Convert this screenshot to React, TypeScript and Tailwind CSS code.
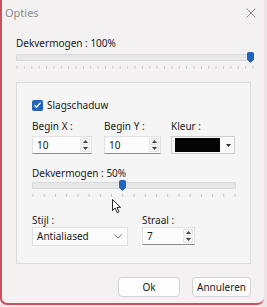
import React from "react";

const FONT = { fontFamily: '"Noto Sans", "Open Sans", Arial, sans-serif' };

function Ticks({ count, width }: { count: number; width: number }) {
  const step = (width - 2) / (count - 1);
  return (
    <svg width={width} height={4} className="block">
      {Array.from({ length: count }).map((_, i) => (
        <rect key={i} x={1 + i * step - 0.5} y={0} width={1} height={3} fill="#cacaca" />
      ))}
    </svg>
  );
}

function Thumb() {
  return (
    <svg width={7} height={11} className="block">
      <path d="M0.5 1.5 Q0.5 0.5 1.5 0.5 H5.5 Q6.5 0.5 6.5 1.5 V7.5 L3.5 10.5 L0.5 7.5 Z" fill="#1f64c0" stroke="#16509e" strokeWidth={0.8} />
    </svg>
  );
}

function Slider({ width, value, ticks }: { width: number; value: number; ticks: number }) {
  const left = Math.round((width - 7) * value);
  return (
    <div style={{ width }}>
      <div className="relative h-[11px]">
        <div className="absolute left-0 right-0 top-[2px] h-[7px] rounded-[1px] border border-[#d9d9d9] bg-[#e7e7e7]" />
        <div className="absolute top-0" style={{ left }}>
          <Thumb />
        </div>
      </div>
      <div className="mt-[3px]">
        <Ticks count={ticks} width={width} />
      </div>
    </div>
  );
}

function Spinner() {
  return (
    <div className="flex h-full w-[10px] flex-col gap-[1px]">
      <div className="flex flex-1 items-center justify-center rounded-[1px] border border-[#e4e4e4] bg-[#f4f4f4]">
        <svg width={5} height={3} className="block">
          <path d="M0 3 L2.5 0 L5 3 Z" fill="#444" />
        </svg>
      </div>
      <div className="flex flex-1 items-center justify-center rounded-[1px] border border-[#e4e4e4] bg-[#f4f4f4]">
        <svg width={5} height={3} className="block">
          <path d="M0 0 L2.5 3 L5 0 Z" fill="#444" />
        </svg>
      </div>
    </div>
  );
}

function NumField({ value, width }: { value: string; width: number }) {
  return (
    <div
      className="flex h-[18px] items-stretch border border-[#e3e3e3] border-b-[#8c8c8c] bg-[#fcfcfc]"
      style={{ width }}
    >
      <div className="flex flex-1 items-center pl-[4px] text-[10px] text-[#1a1a1a]">{value}</div>
      <div className="py-[1px] pr-[1px]">
        <Spinner />
      </div>
    </div>
  );
}

const label = "text-[10px] leading-[14px] text-[#1a1a1a]";

export default function App() {
  return (
    <div className="relative h-[307px] w-[267px] overflow-hidden bg-[#efe4e6]" style={FONT}>
      <div className="flex h-[305px] w-[264px] flex-col rounded-b-[7px] border-b-2 border-l-2 border-[#c9515f] bg-[#f3f1f1]">
        {/* title bar */}
        <div className="flex h-[26px] items-center justify-between pl-[3px] pr-[8px]">
          <span className="text-[11px] text-[#8f8f8f]">Opties</span>
          <svg width={10} height={10}>
            <path d="M0.5 0.5 L9.5 9.5 M9.5 0.5 L0.5 9.5" stroke="#8a8a8a" strokeWidth={1} />
          </svg>
        </div>

        <div className="flex flex-col pl-[14px] pr-[12px]">
          <div className={`mt-[10px] ${label}`}>Dekvermogen : 100%</div>
          <div className="mt-[2px]">
            <Slider width={238} value={1} ticks={33} />
          </div>

          {/* group box */}
          <div className="mt-[12px] h-[182px] w-[235px] border border-[#dcdcdc] bg-[#f6f5f5] pl-[15px] pr-[14px]">
            <div className="mt-[15px] flex items-center gap-[4px]">
              <div className="flex h-[11px] w-[11px] items-center justify-center rounded-[2px] bg-[#1f64c0]">
                <svg width={9} height={8}>
                  <path d="M1.5 4.2 L3.6 6.2 L7.6 1.6" stroke="#fff" strokeWidth={1.3} fill="none" />
                </svg>
              </div>
              <span className={label}>Slagschaduw</span>
            </div>

            <div className="mt-[7px] flex">
              <div className="flex w-[72px] flex-col">
                <span className={label}>Begin X :</span>
                <div className="mt-[3px]">
                  <NumField value="10" width={60} />
                </div>
              </div>
              <div className="flex w-[67px] flex-col">
                <span className={label}>Begin Y :</span>
                <div className="mt-[3px]">
                  <NumField value="10" width={57} />
                </div>
              </div>
              <div className="flex flex-col">
                <span className={label}>Kleur :</span>
                <div className="mt-[3px] flex h-[18px] w-[64px] items-center border border-[#cfcfcf] bg-[#f8f8f8] pl-[3px]">
                  <div className="h-[14px] w-[45px] bg-[#050505]" />
                  <div className="ml-[2px] flex h-[14px] flex-1 items-center justify-center">
                    <svg width={5} height={3}>
                      <path d="M0 0 L2.5 3 L5 0 Z" fill="#333" />
                    </svg>
                  </div>
                </div>
              </div>
            </div>

            <div className={`mt-[12px] ${label}`}>Dekvermogen : 50%</div>
            <div className="mt-0">
              <Slider width={204} value={0.44} ticks={19} />
            </div>

            <div className="mt-[15px] flex">
              <div className="flex w-[110px] flex-col">
                <span className={label}>Stijl :</span>
                <div className="flex h-[19px] w-[96px] items-center justify-between border border-[#e0e0e0] bg-[#fbfbfb] pl-[4px] pr-[5px]">
                  <span className="text-[10px] text-[#1a1a1a]">Antialiased</span>
                  <svg width={8} height={5}>
                    <path d="M0.5 0.5 L4 4 L7.5 0.5" stroke="#666" strokeWidth={0.9} fill="none" />
                  </svg>
                </div>
              </div>
              <div className="flex flex-col">
                <span className={label}>Straal :</span>
                <NumField value="7" width={53} />
              </div>
            </div>
          </div>

          {/* buttons */}
          <div className="mt-[13px] flex justify-end gap-[12px] pr-[1px]">
            <button className="h-[20px] w-[62px] rounded-[4px] border border-[#d3d3d3] bg-[#fdfdfd] text-[10px] text-[#1a1a1a]">
              Ok
            </button>
            <button className="h-[20px] w-[59px] rounded-[4px] border border-[#d3d3d3] bg-[#fdfdfd] text-[10px] text-[#1a1a1a]">
              Annuleren
            </button>
          </div>
        </div>
      </div>

      {/* mouse cursor */}
      <svg width={10} height={15} className="absolute left-[112px] top-[199px]">
        <path d="M0.5 0.5 V11.5 L3.2 9 L5.2 13.6 L7 12.8 L5 8.4 H8.6 Z" fill="#fff" stroke="#111" strokeWidth={0.9} strokeLinejoin="round" />
      </svg>
    </div>
  );
}
